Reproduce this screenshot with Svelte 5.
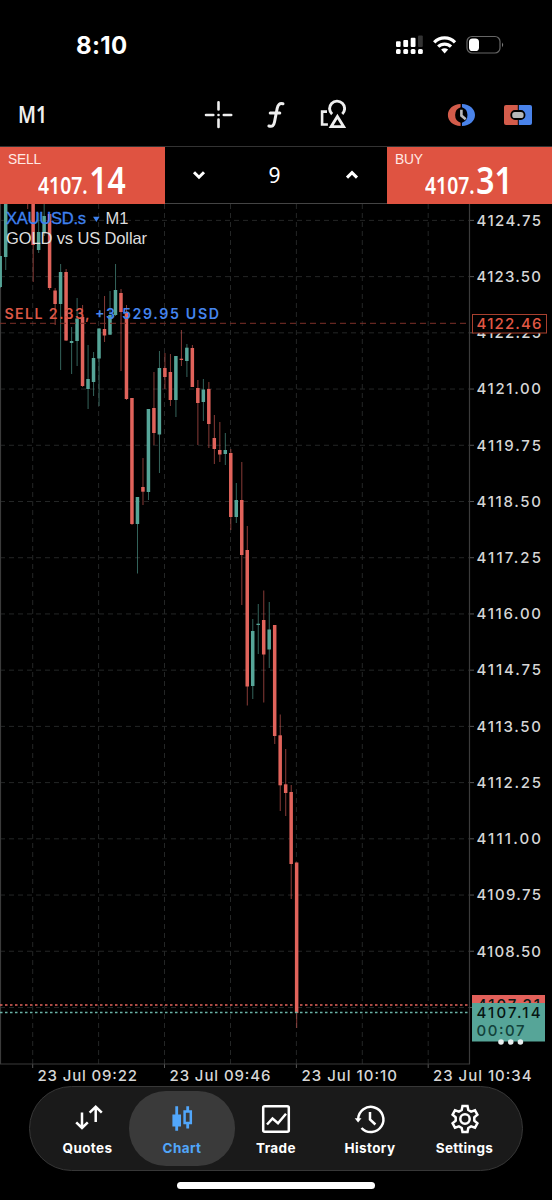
<script lang="ts">
  const STEP = 5.49;
  const LAST_X = 296.7;

  // [body top, body bottom, wick top, wick bottom, direction], oldest first
  const raw: [number, number, number, number, number][] = [
    [256, 287, 256, 288, 1],
    [190, 257, 190, 270, 1],
    [190, 192, 190, 192, 1],
    [190, 192, 190, 192, 1],
    [190, 192, 190, 192, 1],
    [190, 192, 190, 209, 0],
    [190, 245, 190, 282, 0],
    [232, 250, 213, 253, 1],
    [216, 232, 190, 236, 1],
    [214, 288, 214, 290, 0],
    [290.5, 304, 288, 325, 0],
    [272, 304, 264, 370, 1],
    [272, 340.5, 269, 341, 0],
    [341, 343, 327, 374, 1],
    [318.5, 341, 298, 366, 1],
    [317, 386, 305, 387, 0],
    [379, 389, 345, 409, 1],
    [358, 382, 352, 396, 1],
    [328.5, 358.5, 328, 406, 1],
    [329, 335.5, 296, 342, 0],
    [315, 334.7, 291, 335, 1],
    [290, 315, 264, 316, 1],
    [293, 312, 289, 371, 0],
    [312, 399, 305, 400, 0],
    [398, 524, 398, 525, 0],
    [497, 524, 497, 573.5, 1],
    [487, 491.7, 458, 505, 0],
    [409, 492, 409, 500, 1],
    [408, 433, 372, 445, 0],
    [368, 434.5, 351, 473, 1],
    [368, 377, 353, 389, 0],
    [372, 400, 354, 406, 0],
    [356, 400, 356, 417, 1],
    [358.7, 360, 330, 366, 0],
    [347.7, 361, 344, 377, 1],
    [348, 387, 345, 387, 0],
    [388, 403, 380, 445, 0],
    [389.5, 402, 379, 421, 1],
    [389, 424, 382, 448, 0],
    [438, 449, 415, 464, 0],
    [450, 454.5, 422, 462, 0],
    [450, 454, 433, 465, 1],
    [453, 517, 449, 530, 0],
    [500, 517, 483, 523, 1],
    [500, 555, 462, 605, 0],
    [550, 686.5, 526, 705.5, 0],
    [631, 686, 619, 699, 1],
    [623.7, 625, 604, 654, 1],
    [620, 654.5, 590.5, 702.5, 0],
    [629.5, 649.5, 602, 668, 1],
    [625, 736, 625, 744, 0],
    [735.3, 785.3, 714.5, 811, 0],
    [784.3, 793, 749, 816, 0],
    [792, 864, 785, 899, 0],
    [862.5, 1013, 862.5, 1028, 0],
  ];

  const candles = raw.map(([top, bottom, high, low, up], i) => ({
    x: LAST_X - (raw.length - 1 - i) * STEP,
    top,
    bottom,
    high,
    low,
    up: up === 1,
  }));

  const levels = Array.from({ length: 15 }, (_, i) => ({
    y: 220.4 + i * 56.22,
    label: i < 14 ? (4124.75 - i * 1.25).toFixed(2) : '',
  }));

  const columns = [32.7, 98.6, 164.5, 230.5, 296.4, 362.3, 428.2];

  const times = [
    { x: 37.5, label: '23 Jul 09:22', width: 99.5 },
    { x: 169.5, label: '23 Jul 09:46', width: 101 },
    { x: 301.5, label: '23 Jul 10:10', width: 95.5 },
    { x: 433, label: '23 Jul 10:34', width: 98.5 },
  ];

  const tabs = ['Quotes', 'Chart', 'Trade', 'History', 'Settings'];
  let active = $state('Chart');
  let volume = $state(9);
</script>

<div class="screen">
  <header class="status">
    <span class="clock">8:10</span>
    <svg class="status-icons" width="110" height="20" viewBox="0 0 110 20">
      <g fill="#fff">
        <rect x="1" y="6.3" width="4.6" height="5.6" rx="1" />
        <rect x="8.3" y="5" width="4.8" height="6.9" rx="1" />
        <rect x="15.7" y="2.8" width="4.8" height="9.1" rx="1" />
        <rect x="23" y=".4" width="4.8" height="11.5" rx="1" fill="#333" />
        <rect x="1" y="14" width="4.6" height="5" rx="1.5" />
        <rect x="8.3" y="14" width="4.8" height="5" rx="1.5" />
        <rect x="15.7" y="14" width="4.8" height="5" rx="1.5" />
        <rect x="23" y="14" width="4.8" height="5" rx="1.5" />
      </g>
      <g fill="none" stroke="#fff" stroke-width="3.2">
        <path d="M39.2 7.3a14.3 14.3 0 0 1 20.8 0" />
        <path d="M43.2 11.7a9 9 0 0 1 12.8 0" />
      </g>
      <path d="M46.1 14.6q3.5-2.8 7 0l-3.5 3.8z" fill="#fff" />
      <rect x="72" y="1.5" width="33" height="16.5" rx="5" fill="none" stroke="#666" stroke-width="1.2" />
      <rect x="74" y="3.5" width="10" height="12.5" rx="3.6" fill="#fff" />
      <path d="M107 7.4q2.4 2.3 0 4.8z" fill="#777" />
    </svg>
  </header>

  <div class="toolbar">
    <span class="timeframe">M1</span>
    <svg class="tools" width="142" height="32" viewBox="0 0 142 32">
      <g fill="none" stroke="#eee" stroke-width="2.6" stroke-linecap="round">
        <path d="M14.5 3.2v7.3M14.5 20.5v7.4M2 16h7.3M19.8 16h7.4" />
        <path d="M14.5 16h.01" />
        <path d="M79 4.8c-3.4-.9-5.1.8-5.8 4.4l-2.7 13.8c-.7 3.8-2.2 5-5.6 4M66.2 14.1h9.6" stroke-width="3" />
        <path d="M123 12.6h-4.9v12.9h5.8" stroke-linecap="butt" />
        <path d="M128.1 15.2a7.5 7.5 0 1 1 10.2-.2" stroke-linecap="butt" stroke-width="2.9" />
        <path d="M133.4 17.4l6.3 10.3h-12.6z" stroke-linecap="butt" stroke-width="2.8" />
      </g>
    </svg>
    <svg class="modes" width="86" height="26" viewBox="0 0 86 26">
      <path d="M13.6 2v3.2a7.9 8.2 0 0 0 0 15.6V24C6 23.8.9 19 .9 13S6 2.2 13.6 2z" fill="#d35c4b" />
      <path d="M15 2v3.2a7.9 8.2 0 0 1 0 15.6V24c7.6-.2 13-5 13-11S22.6 2.2 15 2z" fill="#4a83ea" />
      <path d="M14.4 7.8v5.8l4.3 3.6" fill="none" stroke="#bbb" stroke-width="2.6" />
      <path d="M59 3h11.8v20H59a2 2 0 0 1-2-2V5a2 2 0 0 1 2-2z" fill="#d35c4b" />
      <path d="M71.8 3H83a2 2 0 0 1 2 2v16a2 2 0 0 1-2 2H71.8z" fill="#4a83ea" />
      <rect x="64.3" y="9" width="13.2" height="8" rx="3.6" fill="#b5b8ba" stroke="#000" stroke-width="1.8" />
    </svg>
  </div>

  <div class="deal">
    <button class="quote">
      <span class="side">SELL</span>
      <span class="price"><span>4107.</span><b>14</b></span>
    </button>
    <div class="volume">
      <button aria-label="Less" onclick={() => volume--}>
        <svg width="14" height="10" viewBox="0 0 14 10"><path d="M2 2.2l5 5 5-5" /></svg>
      </button>
      <span>{volume}</span>
      <button aria-label="More" onclick={() => volume++}>
        <svg width="14" height="10" viewBox="0 0 14 10"><path d="M2 7.6l5-5 5 5" /></svg>
      </button>
    </div>
    <button class="quote buy">
      <span class="side">BUY</span>
      <span class="price"><span>4107.</span><b>31</b></span>
    </button>
  </div>

  <svg class="chart" width="552" height="996" viewBox="0 204 552 996">
    <g class="grid">
      {#each levels as level}
        <path d="M0 {level.y}H470" />
        <path d="M470 {level.y}h4" class="tick" />
      {/each}
      {#each columns as x, i}
        <path d="M{x} 204V1064" />
        {#if i % 2 === 0}
          <path d="M{x} 1064v4" class="tick" />
        {/if}
      {/each}
    </g>
    <path d="M.5 204V1064M0 1064H469.5V204" class="frame" />

    {#each candles as c}
      <g class={c.up ? 'up' : 'down'}>
        <rect class="wick" x={c.x - 0.5} y={c.high} width="1" height={c.low - c.high} />
        <rect x={c.x - 1.8} y={c.top} width="3.5" height={c.bottom - c.top} />
      </g>
    {/each}

    <path d="M0 323.3H469" class="entry" />
    <path d="M0 1005H469" class="ask" />
    <path d="M0 1012.5H469" class="bid" />

    <text class="symbol blue" x="6" y="224" textLength="80">XAUUSD.s</text>
    <path d="M93 216.8h6.6l-3.3 5.2z" fill="#3f82f0" />
    <text class="symbol" x="105.5" y="224" textLength="23">M1</text>
    <text class="symbol" x="6" y="244.4" textLength="141">GOLD vs US Dollar</text>

    <text class="position" x="4.5" y="319" textLength="85" fill="#db5746">SELL 2.33,</text>
    <text class="position" x="95" y="319" textLength="124" fill="#4585ee">+3 529.95 USD</text>

    {#each levels as level}
      <text class="axis" x="476.5" y={level.y + 5.3} textLength={level.label ? 64.5 : undefined}>{level.label}</text>
    {/each}
    {#each times as t}
      <text class="axis" x={t.x} y="1081" textLength={t.width}>{t.label}</text>
    {/each}

    <rect x="472.5" y="314.5" width="74" height="18.5" fill="#000" stroke="#a8402f" />
    <text class="axis entry-price" x="476.5" y="328.7" textLength="65">4122.46</text>

    <rect x="472" y="995" width="73" height="40" fill="#e2605a" />
    <text class="axis dark" x="477" y="1010" textLength="63">4107.31</text>
    <rect x="472" y="1003" width="73" height="38.5" fill="#56a598" />
    <text class="axis dark" x="476.5" y="1018" textLength="64">4107.14</text>
    <text class="axis timer" x="476.5" y="1035.7" textLength="48">00:07</text>
    <g fill="#e8eeee">
      <circle cx="501" cy="1042" r="2.8" />
      <circle cx="510.7" cy="1042" r="2.8" />
      <circle cx="520.4" cy="1042" r="2.8" />
    </g>
  </svg>

  <nav class="tabs">
    {#each tabs as tab}
      <button class:active={active === tab} onclick={() => (active = tab)}>
        <svg width="30" height="30" viewBox="0 0 30 30">
          {#if tab === 'Quotes'}
            <path d="M9 8.5v15M3.2 18.3L9 24l5.8-5.7M22.7 18V3.3M16.6 8.7l6.1-5.9 6.1 5.9" />
          {:else if tab === 'Chart'}
            <path d="M9.7 2.3v24.5M20.7 2.3v5M20.7 19v5.5" stroke-width="2.8" />
            <path d="M5.4 10.5h8.6v12H5.4z" fill="currentColor" stroke="none" />
            <path d="M17.6 7.6h6.2v11.3h-6.2z" />
          {:else if tab === 'Trade'}
            <rect x="2.2" y="2.2" width="25.6" height="25.6" rx="1.5" />
            <path d="M6 20.5l5.5-6 5.5 4.7 8-9.5" />
          {:else if tab === 'History'}
            <path d="M3.2 15.2A12.6 12.6 0 1 1 6.5 24" />
            <path d="M-.3 14.3h6.8l-3.4 4.2z" fill="currentColor" stroke="none" />
            <path d="M15 8v7.5l5.4 5" />
          {:else}
            <path d="M12.5 2h5l.8 4 2.8 1.6 3.9-1.3 2.4 4.3-3.1 2.7v3.4l3.1 2.7-2.4 4.3-3.9-1.3-2.8 1.6-.8 4h-5l-.8-4-2.8-1.6L5 23.7l-2.4-4.3 3.1-2.7v-3.4l-3.1-2.7L5 6.3l3.9 1.3L11.7 6z" />
            <circle cx="15" cy="15" r="4.7" />
          {/if}
        </svg>
        <span>{tab}</span>
      </button>
    {/each}
  </nav>
  <div class="home"></div>
</div>

<style>
  :global(body) {
    margin: 0;
    background: #000;
  }

  .screen {
    position: relative;
    width: 552px;
    height: 1200px;
    overflow: hidden;
    background: #000;
    color: #fff;
    font-family: Inter, 'Liberation Sans', sans-serif;
  }

  button {
    margin: 0;
    padding: 0;
    border: 0;
    background: none;
    color: inherit;
    font: inherit;
  }

  .status {
    display: flex;
    align-items: center;
    justify-content: space-between;
    box-sizing: border-box;
    height: 88px;
    padding: 2px 47px 0 76px;
  }

  .clock {
    font-size: 24px;
    font-weight: 700;
    letter-spacing: 0.35px;
  }

  .toolbar {
    display: flex;
    align-items: center;
    justify-content: space-between;
    box-sizing: border-box;
    height: 58px;
    padding: 0 19px 4px 18px;
  }

  .timeframe {
    width: 72px;
    font-family: 'Noto Sans', sans-serif;
    font-size: 23px;
    font-weight: 600;
    line-height: 28px;
    padding-bottom: 2px;
    transform: scaleX(0.84);
    transform-origin: left;
    color: #eee;
  }

  .tools {
    margin-left: 13px;
  }

  .deal {
    display: grid;
    grid-template-columns: 165px 222px 165px;
    height: 58px;
    box-sizing: border-box;
    border-top: 1px solid #333;
    border-bottom: 1px solid #444;
  }

  .quote {
    display: flex;
    flex-direction: column;
    background: #df5341;
    text-align: left;
  }

  .side {
    padding: 5px 0 0 8px;
    font-family: 'Liberation Sans', sans-serif;
    font-size: 13.8px;
    line-height: 16px;
    letter-spacing: -0.2px;
    color: #ffe9e4;
  }

  .price {
    display: flex;
    align-items: baseline;
    align-self: flex-start;
    margin: -6px 0 0 38px;
    font-family: 'Noto Sans', sans-serif;
    font-size: 22.5px;
    font-weight: 600;
    line-height: 36px;
    white-space: nowrap;
    transform: scaleX(0.86);
    transform-origin: left;
  }

  .price b {
    margin-left: 2px;
    font-size: 37px;
    font-weight: 600;
  }

  .volume {
    display: flex;
    align-items: center;
    justify-content: space-between;
    padding: 0 28px 1px 27px;
    font-family: 'Noto Sans', sans-serif;
    font-size: 21px;
  }

  .volume span {
    margin-right: 2px;
  }

  .volume svg {
    display: block;
    fill: none;
    stroke: #fff;
    stroke-width: 3;
  }

  .chart {
    display: block;
  }

  .grid path {
    fill: none;
    stroke: #242626;
    stroke-width: 1;
    stroke-dasharray: 5 4;
  }

  .grid .tick {
    stroke: #555;
    stroke-dasharray: none;
  }

  .frame {
    fill: none;
    stroke: #3b3b3b;
    stroke-width: 1.2;
  }

  .up {
    fill: #56a598;
  }

  .down {
    fill: #e1635b;
  }

  .wick {
    opacity: 0.6;
  }

  .entry {
    stroke: #7d3028;
    stroke-dasharray: 6 4;
  }

  .ask,
  .bid {
    stroke: #e2645c;
    stroke-width: 1.6;
    stroke-dasharray: 2.5 2.5;
  }

  .bid {
    stroke: #6ab3a7;
  }

  .symbol {
    font-family: 'Liberation Sans', sans-serif;
    font-size: 16.5px;
    fill: #ddd;
  }

  .symbol.blue {
    fill: #3f82f0;
    stroke: #3f82f0;
    stroke-width: 0.3;
  }

  .position {
    font-size: 14.2px;
    font-weight: 600;
  }

  .axis {
    font-size: 15px;
    font-weight: 550;
    fill: #d6d6d6;
  }

  .axis.entry-price {
    fill: #e35845;
  }

  .axis.dark {
    fill: #071512;
  }

  .axis.timer {
    fill: #12413a;
  }

  .tabs {
    position: absolute;
    left: 29px;
    top: 1086px;
    display: grid;
    grid-template-columns: 105px 84px 104px 84px 105px;
    justify-content: center;
    box-sizing: border-box;
    width: 494px;
    height: 85px;
    padding: 4px;
    border: 1px solid #373737;
    border-radius: 43px;
    background: #1a1a1a;
  }

  .tabs button {
    display: flex;
    flex-direction: column;
    align-items: center;
    justify-self: center;
    width: 106px;
    height: 75px;
    border-radius: 37px;
    font-size: 13.5px;
    font-weight: 650;
    letter-spacing: 0.4px;
  }

  .tabs .active {
    background: #3a3a3a;
    color: #51a6fa;
  }

  .tabs svg {
    margin: 13px 0 6px;
    fill: none;
    stroke: currentColor;
    stroke-width: 2.5;
    overflow: visible;
  }

  .home {
    position: absolute;
    left: 177px;
    top: 1182px;
    width: 198px;
    height: 7px;
    border-radius: 4px;
    background: #fff;
  }
</style>
